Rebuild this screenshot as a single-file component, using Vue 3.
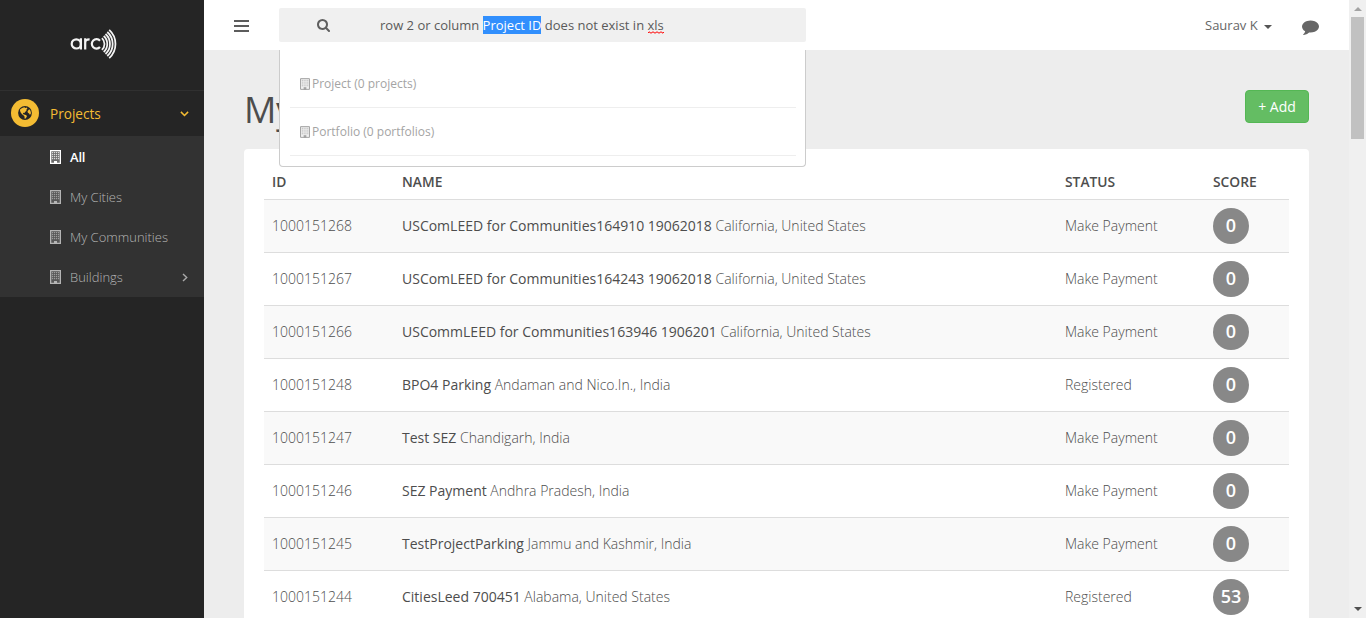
<script setup>
const nav = [
  { label: 'All', active: true },
  { label: 'My Cities' },
  { label: 'My Communities' },
  { label: 'Buildings', more: true }
]
const results = ['Project (0 projects)', 'Portfolio (0 portfolios)']
const rows = [
  { id: '1000151268', name: 'USComLEED for Communities164910 19062018', place: 'California, United States', status: 'Make Payment', score: 0 },
  { id: '1000151267', name: 'USComLEED for Communities164243 19062018', place: 'California, United States', status: 'Make Payment', score: 0 },
  { id: '1000151266', name: 'USCommLEED for Communities163946 1906201', place: 'California, United States', status: 'Make Payment', score: 0 },
  { id: '1000151248', name: 'BPO4 Parking', place: 'Andaman and Nico.In., India', status: 'Registered', score: 0 },
  { id: '1000151247', name: 'Test SEZ', place: 'Chandigarh, India', status: 'Make Payment', score: 0 },
  { id: '1000151246', name: 'SEZ Payment', place: 'Andhra Pradesh, India', status: 'Make Payment', score: 0 },
  { id: '1000151245', name: 'TestProjectParking', place: 'Jammu and Kashmir, India', status: 'Make Payment', score: 0 },
  { id: '1000151244', name: 'CitiesLeed 700451', place: 'Alabama, United States', status: 'Registered', score: 53 }
]
const windows = [2.6, 4.6, 6.6, 8.6].flatMap(y => [2.5, 4.5, 6.5, 8.5].map(x => ({ x, y })))
</script>

<template>
  <div class="app">
    <aside class="sidebar">
      <div class="brand">
        <svg class="logo" width="48" height="30" viewBox="0 0 48 30">
          <g fill="none" stroke="#f4f4f4" stroke-width="2.2">
            <circle cx="6.3" cy="14.9" r="4.600" />
            <path d="M10.900 9.300V20.600M15.200 20.600V9.300M15.200 14Q15.200 10.300 19.600 10.400" />
            <path d="M30 11.700A4.700 4.700 0 1 0 30 18" />
          </g>
          <g fill="none" stroke="#f4f4f4" stroke-width="1.75">
            <path d="M31.900 9.100A8 8 0 0 1 31.900 20.900" />
            <path d="M33.700 7A10.700 10.700 0 0 1 33.700 23" />
            <path d="M35.500 5A13.400 13.400 0 0 1 35.500 25" />
            <path d="M37.300 3A16.100 16.100 0 0 1 37.300 27" />
            <path d="M39.200 .9A19 19 0 0 1 39.200 29.100" />
          </g>
        </svg>
      </div>
      <div class="section">
        <span class="globe">
          <svg width="14" height="14" viewBox="0 0 14 14">
            <circle cx="7" cy="7" r="6.900" fill="#252525" />
            <path fill="#f4bc33" d="M2.200 3.200 4.200 1.900 6.200 1.300 7.600 2.100 9 1.500 9.300 2.700 8.100 4 8.700 4.700 7.300 5.800 6.400 6.900 5.300 6.700 4.900 7.900 6.100 8.500 7.900 9 9 9.900 8.500 11.300 7.300 12.700 6.500 12.500 6.600 10.800 5.700 9.500 4 8.200 2.700 6.600 2 4.800ZM10.100 4.400 11.200 3.200 12.200 4.300 12.900 6.200 12.800 8 11.800 8.800 11.100 7.400 9.900 6.800 9.500 5.600Z" />
          </svg>
        </span>
        <span class="section-label">Projects</span>
        <svg class="chevron" width="9" height="6" viewBox="0 0 9 6"><path d="M.9.9 4.500 4.500 8.100.9" fill="none" stroke="#f4bc33" stroke-width="1.5" /></svg>
      </div>
      <nav class="subnav">
        <a v-for="n in nav" :key="n.label" class="nav-item" :class="{ active: n.active }">
          <svg class="building" width="11" height="14" viewBox="0 0 11 14">
            <path d="M.6.6H10.400V13.400H.6Z" fill="currentColor" fill-opacity=".28" stroke="currentColor" stroke-width="1.3" />
            <rect v-for="w in windows" :key="w.x + '-' + w.y" :x="w.x - .6" :y="w.y - .6" width="1.2" height="1.2" fill="currentColor" fill-opacity=".75" />
            <rect x="4" y="11" width="3" height="3" fill="currentColor" />
          </svg>
          <span>{{ n.label }}</span>
          <svg v-if="n.more" class="chevron" width="6" height="9" viewBox="0 0 6 9"><path d="M1 1 4.700 4.500 1 8" fill="none" stroke="#aaa" stroke-width="1.4" /></svg>
        </a>
      </nav>
    </aside>

    <div class="main">
      <header class="topbar">
        <svg class="menu" width="15" height="12" viewBox="0 0 15 12"><path d="M0 1H15M0 6H15M0 11H15" stroke="#5c5c5c" stroke-width="2" /></svg>
        <div class="search">
          <svg class="magnifier" width="13" height="13" viewBox="64 128 1664 1664"><path fill="#5f5f5f" d="M1216 832q0-185-131.500-316.500t-316.500-131.500-316.500 131.500-131.500 316.500 131.500 316.500 316.500 131.500 316.500-131.500 131.500-316.500zm512 832q0 52-38 90t-90 38q-54 0-90-38l-343-342q-179 124-399 124-143 0-273.500-55.500t-225-150-150-225-55.500-273.500 55.500-273.500 150-225 225-150 273.500-55.500 273.500 55.500 225 150 150 225 55.500 273.500q0 220-124 399l343 343q37 37 37 90z" /></svg>
          <div class="query">row 2 or column <span class="selected">Project ID</span> does not exist in <span class="misspelt">xls<svg class="squiggle" width="16" height="3" viewBox="0 0 16 3"><path d="M0 2 1 .8 3 2.200 5 .8 7 2.200 9 .8 11 2.200 13 .8 15 2.200 16 1" fill="none" stroke="#f00" /></svg></span></div>
          <div class="dropdown">
            <div v-for="r in results" :key="r" class="result">
              <svg class="building" width="10" height="12" viewBox="0 0 11 13">
                <path d="M.6.6H10.400V12.400H.6Z" fill="currentColor" fill-opacity=".15" stroke="currentColor" stroke-width="1.1" />
                <rect v-for="w in windows" :key="w.x + '-' + w.y" :x="w.x - .5" :y="w.y - .7" width="1.1" height="1.1" fill="currentColor" fill-opacity=".8" />
                <rect x="4" y="10" width="3" height="3" fill="currentColor" />
              </svg>
              <span>{{ r }}</span>
            </div>
          </div>
        </div>
        <div class="user"><span>Saurav K</span><i class="caret"></i></div>
        <svg class="comment" width="17" height="15" viewBox="0 128 1792 1536" preserveAspectRatio="none"><path fill="#666" d="M1792 896q0 174-120 321.500t-326 233-450 85.500q-70 0-145-8-198 175-460 242-49 14-114 22-17 2-30.500-9t-17.500-29v-1q-3-4-.5-12t2-10 4.500-9.500l6-9 7-8.500 8-9q7-8 31-34.500t34.500-38 31-39.500 32.500-51 27-59 26-76q-157-89-247.500-220t-90.500-281q0-130 71-248.500t191-204.500 286-136.500 348-50.500q244 0 450 85.500t326 233 120 321.500z" transform="translate(0 -60) scale(1 .96)" /></svg>
      </header>
      <main class="content">
        <div class="heading">
          <h1>My</h1>
          <button class="add">+ Add</button>
        </div>
        <section class="card">
          <div class="row head"><span>ID</span><span>NAME</span><span>STATUS</span><span>SCORE</span></div>
          <div v-for="r in rows" :key="r.id" class="row body">
            <span class="cell">{{ r.id }}</span>
            <span class="cell"><b>{{ r.name }}</b> {{ r.place }}</span>
            <span class="cell">{{ r.status }}</span>
            <span class="score">{{ r.score }}</span>
          </div>
        </section>
      </main>
    </div>

    <div class="scrollbar">
      <i class="arrow up"></i>
      <i class="thumb"></i>
      <i class="arrow down"></i>
    </div>
  </div>
</template>

<style>
html, body { margin: 0; overflow: hidden; }
</style>

<style scoped>
.app { display: flex; width: 1366px; height: 618px; overflow: hidden; font-family: "Open Sans", "Noto Sans", sans-serif; font-size: 14px; color: #4d4d4d; background: #ededed; }
.app * { box-sizing: border-box; }
svg { display: block; flex: none; }
.sidebar { width: 204px; flex: none; background: #252525; }
.brand { height: 90px; padding: 29px 0 0 70px; }
.section { display: flex; align-items: center; height: 46px; padding: 0 15px 0 11px; border-top: 1px solid #303030; color: #f4bc33; }
.globe { display: flex; align-items: center; justify-content: center; width: 28px; height: 28px; margin-top: -1px; border-radius: 50%; background: #f4bc33; }
.section-label { margin-left: 11px; font-size: 13.6px; }
.chevron { margin-left: auto; }
.subnav { height: 161px; padding-top: 1px; background: #323232; }
.nav-item { display: flex; align-items: center; height: 40px; padding: 0 16px 0 50px; font-size: 13px; font-weight: 300; color: #b4b4b4; }
.nav-item span { margin-left: 9px; }
.nav-item.active { color: #fff; font-weight: 600; letter-spacing: -.2px; }
.main { width: 1145px; flex: none; }
.topbar { display: flex; height: 50px; padding-left: 30px; background: #fff; }
.menu { margin-top: 20px; }
.search { position: relative; display: flex; width: 527px; height: 34px; margin: 8px 0 0 30px; padding: 0 0 0 38px; border-radius: 2px; background: #f0f0f0; }
.magnifier { margin-top: 11px; }
.query { margin-left: 50px; font-size: 13px; line-height: 34px; white-space: pre; color: #5a5a5a; }
.selected { line-height: 18px; background: #318ffd; color: #fff; }
.misspelt { position: relative; }
.squiggle { position: absolute; left: 0; bottom: 0; }
.dropdown { position: absolute; left: 0; top: 42px; width: 527px; height: 117px; padding: 10px 9px 0 10px; border: 1px solid #ccc; border-top: 0; border-radius: 0 0 4px 4px; background: #fff; }
.result { display: flex; align-items: center; height: 48px; padding-left: 10px; border-bottom: 1px solid #eee; font-size: 12px; color: #a4a4a4; }
.result span { margin-left: 2px; }
.user { display: flex; align-items: center; height: 50px; margin-left: 399px; font-size: 13px; color: #666; }
.caret { margin: 3px 0 0 6px; border: 4px solid transparent; border-top-color: #555; border-bottom: 0; }
.comment { margin: 20px 0 0 30px; }
.content { padding: 0 40px; }
.heading { display: flex; justify-content: space-between; height: 99px; padding-top: 40px; }
h1 { margin: -5px 0 0; font-size: 36px; font-weight: 400; line-height: 50px; letter-spacing: -.5px; }
.add { width: 64px; height: 33px; padding: 0; border: 1px solid #54b754; border-radius: 4px; background: #64bd63; color: #fff; font: 400 14px "Open Sans", sans-serif; }
.card { height: 520px; padding: 15px 20px 0; border-radius: 4px; background: #fff; }
.row { display: grid; grid-template-columns: 130px 663px 148px 76px; align-items: center; padding-left: 8px; white-space: nowrap; }
.head { height: 35px; padding-bottom: 1px; font-weight: 600; font-size: 13.8px; }
.body { height: 53px; border-top: 1px solid #ddd; font-weight: 300; }
.body:nth-child(even) { background: #f9f9f9; }
.body b { font-weight: 400; }
.cell { padding-bottom: 2px; }
.score { width: 36px; height: 36px; border-radius: 50%; background: #888; color: #fff; font-size: 18px; font-weight: 600; line-height: 35px; text-align: center; }
.scrollbar { display: flex; flex-direction: column; align-items: center; width: 17px; height: 618px; background: #f0f0f0; }
.arrow { width: 0; height: 0; border: 4px solid transparent; }
.up { margin-top: 7px; border-top: 0; border-bottom-color: #a3a3a3; }
.thumb { width: 13px; height: 122px; margin-top: 6px; background: #c1c1c1; }
.down { margin: auto 0 7px; border-bottom: 0; border-top-color: #505050; }
</style>
